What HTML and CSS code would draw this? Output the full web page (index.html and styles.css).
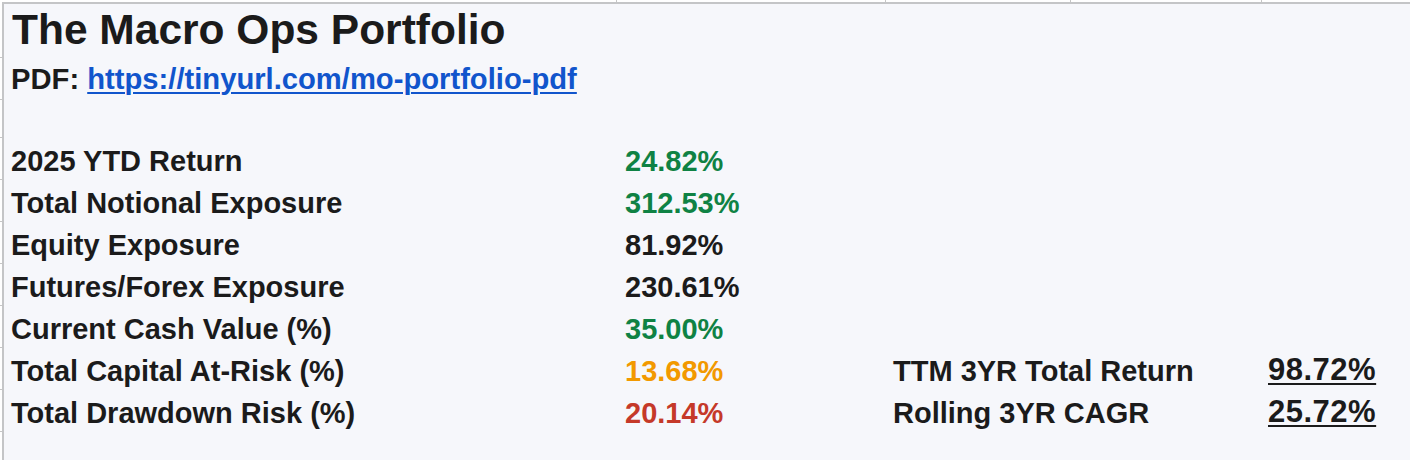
FILE: index.html
```html
<!DOCTYPE html>
<html lang="en">
<head>
<meta charset="utf-8">
<title>The Macro Ops Portfolio</title>
<link rel="stylesheet" href="styles.css">
</head>
<body>
<div class="frame">
  <div class="corner"></div>
  <div class="ruler-top">
    <div class="tick-col c1"></div>
    <div class="tick-col c2"></div>
    <div class="tick-col c3"></div>
    <div class="tick-col c4"></div>
    <div class="tick-col c5"></div>
  </div>
  <div class="ruler-left">
    <div class="tick-row r-title"></div>
    <div class="tick-row r-pdf"></div>
    <div class="tick-row r-blank"></div>
    <div class="tick-row r-data"></div>
    <div class="tick-row r-data"></div>
    <div class="tick-row r-data"></div>
    <div class="tick-row r-data"></div>
    <div class="tick-row r-data"></div>
    <div class="tick-row r-data"></div>
    <div class="tick-row r-data"></div>
    <div class="tick-row r-rest"></div>
  </div>
  <div class="sheet">
    <div class="row row-title">
      <h1 class="cell title">The Macro Ops Portfolio</h1>
    </div>
    <div class="row row-pdf">
      <div class="cell pdf">PDF: <a class="link" href="#">https://tinyurl.com/mo-portfolio-pdf</a></div>
    </div>
    <div class="row row-blank"></div>

    <div class="row row-data">
      <div class="cell label">2025 YTD Return</div>
      <div class="cell value green">24.82%</div>
    </div>
    <div class="row row-data">
      <div class="cell label">Total Notional Exposure</div>
      <div class="cell value green">312.53%</div>
    </div>
    <div class="row row-data">
      <div class="cell label">Equity Exposure</div>
      <div class="cell value">81.92%</div>
    </div>
    <div class="row row-data">
      <div class="cell label">Futures/Forex Exposure</div>
      <div class="cell value">230.61%</div>
    </div>
    <div class="row row-data">
      <div class="cell label">Current Cash Value (%)</div>
      <div class="cell value green">35.00%</div>
    </div>
    <div class="row row-data">
      <div class="cell label">Total Capital At-Risk (%)</div>
      <div class="cell value orange">13.68%</div>
      <div class="cell label2">TTM 3YR Total Return</div>
      <div class="cell value2">98.72%</div>
    </div>
    <div class="row row-data">
      <div class="cell label">Total Drawdown Risk (%)</div>
      <div class="cell value red">20.14%</div>
      <div class="cell label2">Rolling 3YR CAGR</div>
      <div class="cell value2">25.72%</div>
    </div>
  </div>
</div>
</body>
</html>
```

FILE: styles.css
```css
html, body {
  margin: 0;
  padding: 0;
  background: #ffffff;
}

body {
  width: 1410px;
  height: 460px;
  overflow: hidden;
  font-family: "Liberation Sans", Arial, sans-serif;
  color: #1b1b1b;
}

.frame {
  display: grid;
  grid-template-columns: 2px 1fr;
  grid-template-rows: 2px 1fr;
  width: 1410px;
  height: 460px;
}

.corner {
  background: #ffffff;
}

.ruler-top {
  display: flex;
  height: 2px;
}

.tick-col {
  border-right: 1px solid #c6c6c6;
  height: 2px;
  flex: none;
}

.tick-col.c1 { width: 614px; }
.tick-col.c2 { width: 268px; }
.tick-col.c3 { width: 184px; }
.tick-col.c4 { width: 190px; }
.tick-col.c5 { flex: 1; border-right: none; }

.ruler-left {
  display: flex;
  flex-direction: column;
}

.tick-row {
  border-bottom: 1px solid #c6c6c6;
  flex: none;
}

.tick-row.r-title { height: 55px; }
.tick-row.r-pdf { height: 41px; }
.tick-row.r-blank { height: 37px; }
.tick-row.r-data { height: 41px; }
.tick-row.r-rest { flex: 1; border-bottom: none; }

.sheet {
  background: #f6f7fb;
  border-top: 2px solid #c4c5c7;
  border-left: 2px solid #c4c5c7;
  display: flex;
  flex-direction: column;
}

.row {
  display: grid;
  grid-template-columns: 613px 269px 376px 1fr;
  align-items: end;
  flex: none;
}

.row-title { height: 54px; }
.row-pdf { height: 42px; }
.row-blank { height: 38px; }
.row-data { height: 42px; padding-bottom: 2px; box-sizing: border-box; }

.cell {
  padding-left: 8px;
  white-space: nowrap;
}

.title {
  grid-column: 1 / -1;
  margin: 0;
  font-size: 42.5px;
  font-weight: 700;
  line-height: normal;
  padding-bottom: 4px;
  color: #1b1b1b;
}

.pdf {
  grid-column: 1 / -1;
  font-size: 29.2px;
  font-weight: 700;
  padding-bottom: 4px;
  padding-left: 7px;
}

.link {
  color: #1155cc;
  text-decoration: underline;
  text-decoration-thickness: 2px;
  text-underline-offset: 3px;
}

.label, .value, .label2 {
  font-size: 29px;
  font-weight: 700;
}

.label { padding-left: 7px; }
.value { padding-left: 8px; }
.label2 { padding-left: 7px; }
.value2 {
  font-size: 31px;
  letter-spacing: 0.5px;
  font-weight: 700;
  padding-left: 6px;
  text-decoration: underline;
  text-decoration-thickness: 2px;
  text-underline-offset: 3px;
}

.green { color: #0f8244; }
.orange { color: #f29900; }
.red { color: #c53929; }
```
